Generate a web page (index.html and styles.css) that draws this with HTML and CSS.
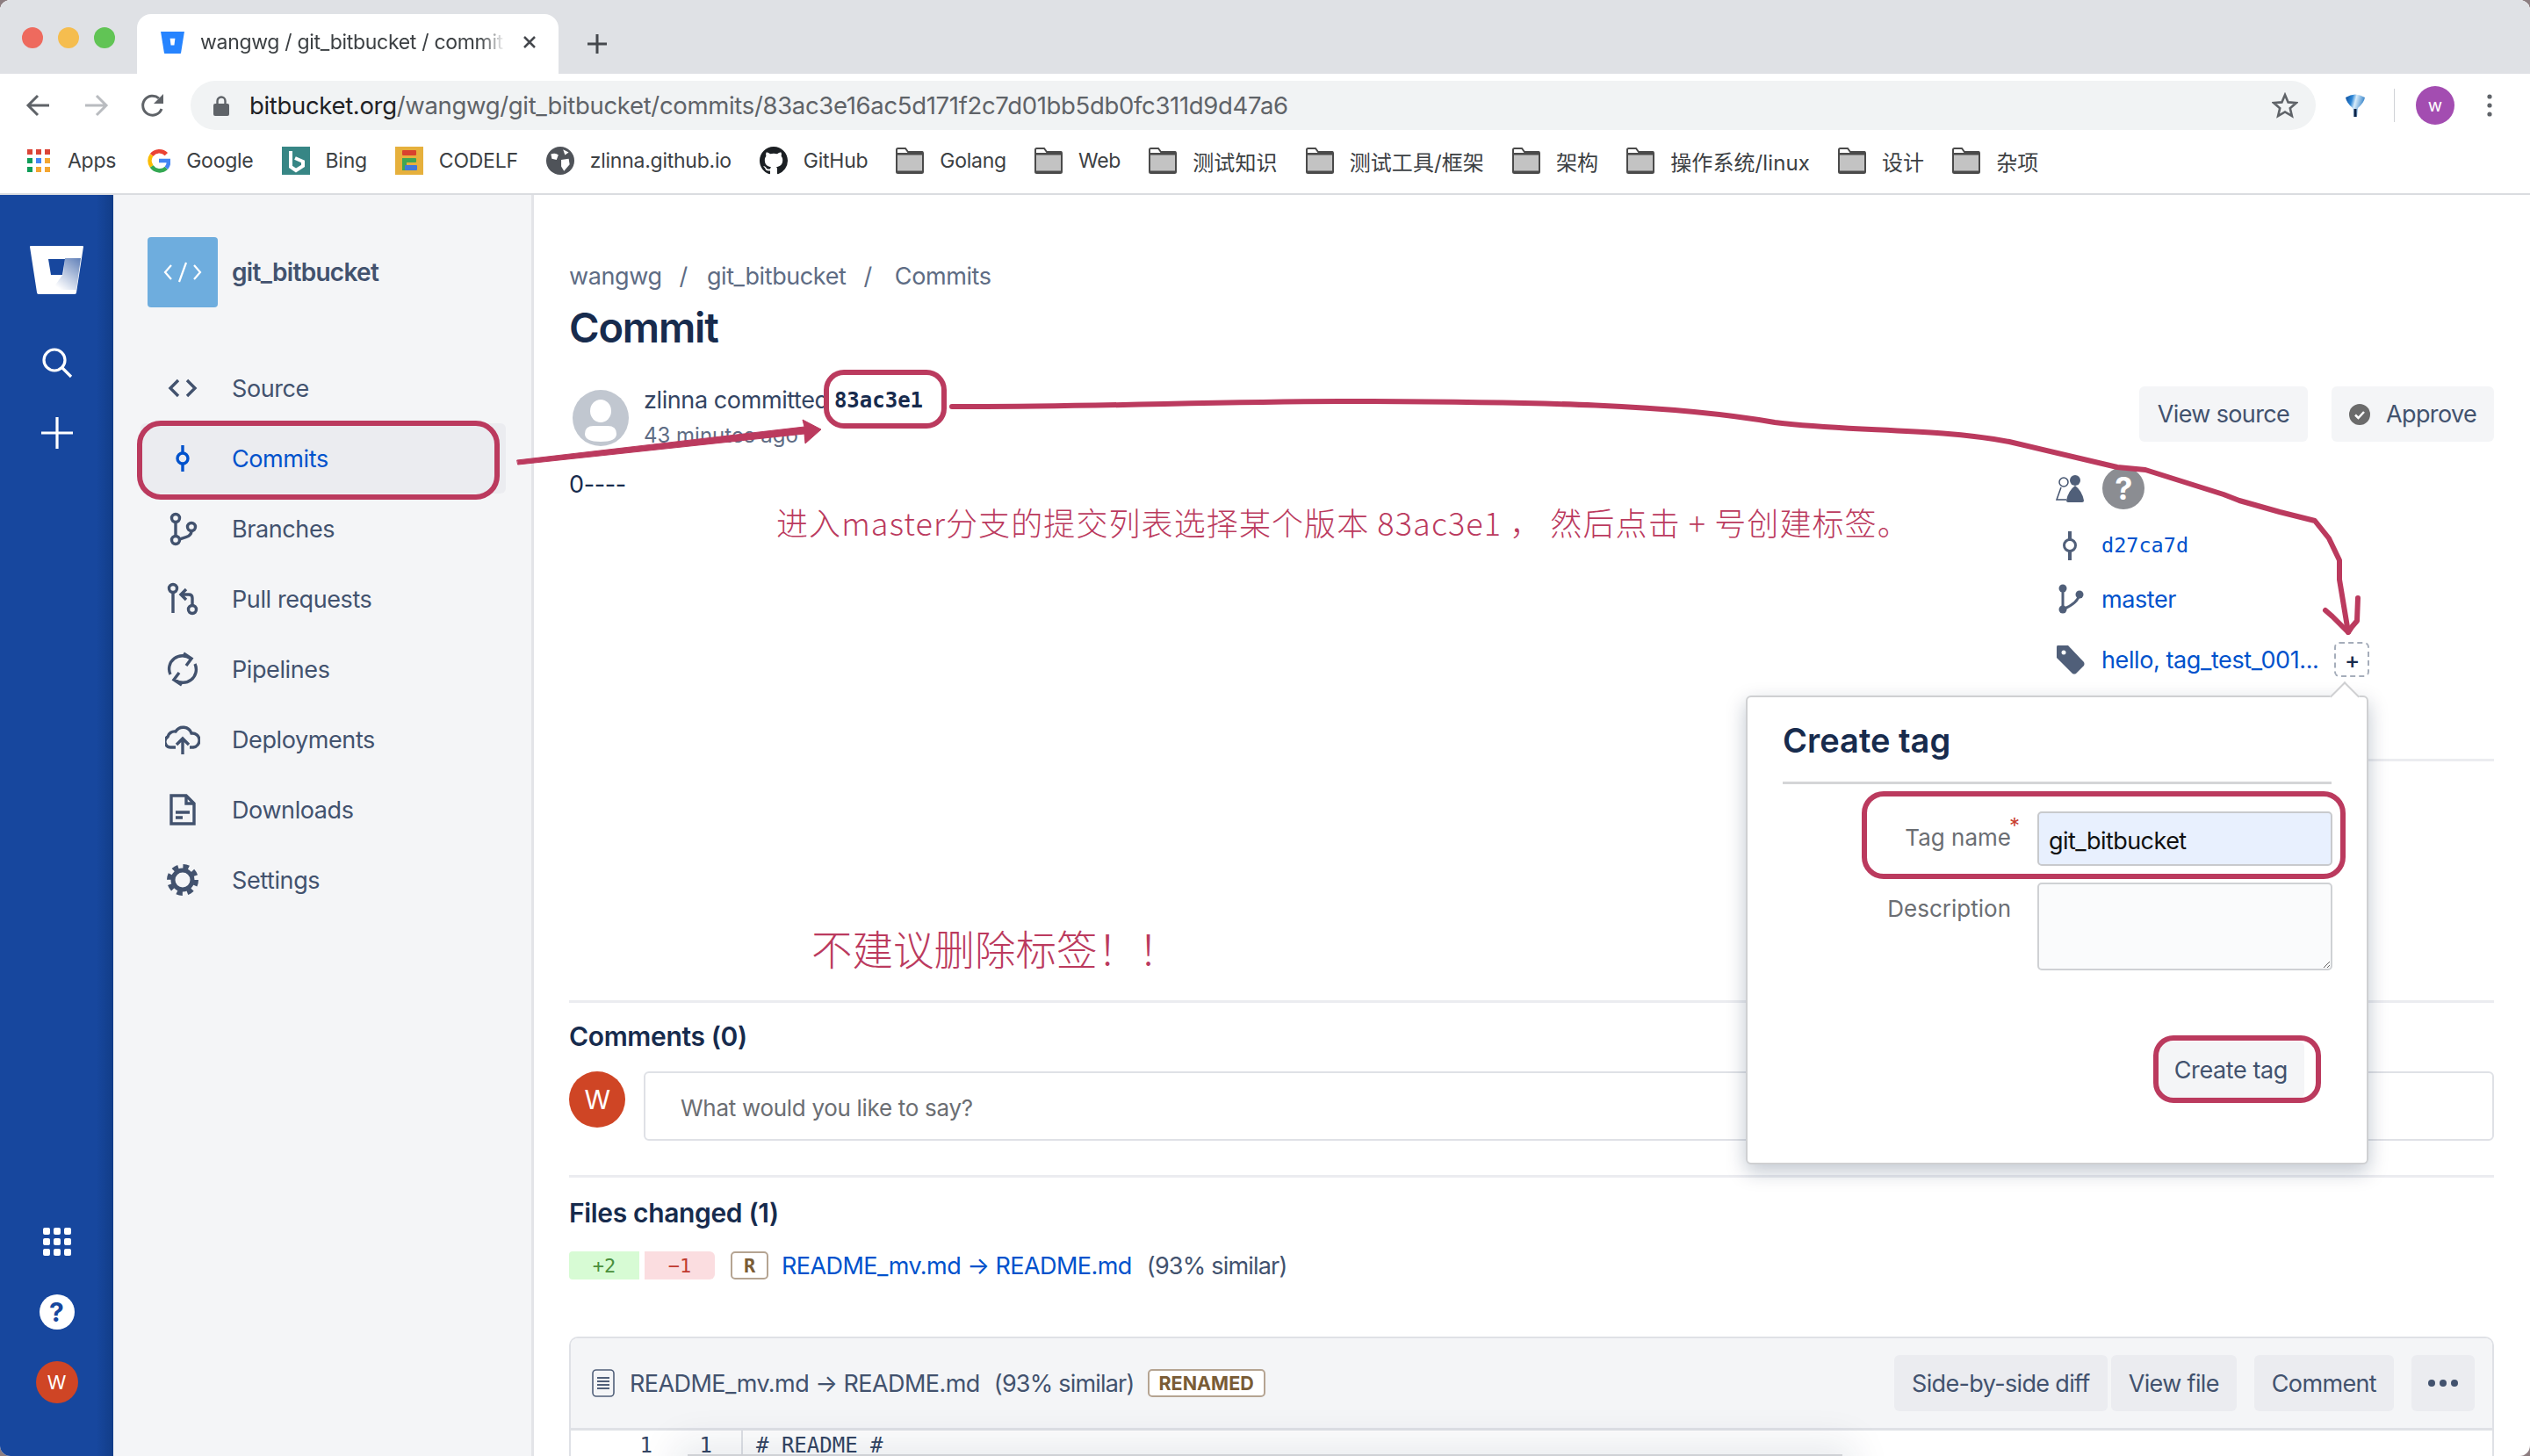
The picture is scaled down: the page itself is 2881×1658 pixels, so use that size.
FILE: index.html
```html
<!DOCTYPE html>
<html lang="en">
<head>
<meta charset="utf-8">
<title>wangwg / git_bitbucket / commit</title>
<link rel="stylesheet" href="styles.css">
</head>
<body>
<svg class="defs" width="0" height="0" aria-hidden="true">
  <defs>
    <symbol id="folder" viewBox="0 0 32 30">
      <path d="M1 5V2.500Q1 1 2.500 1H11l3 4h16.500Q31 5 31 6.500V27.500Q31 29 29.500 29H2.500Q1 29 1 27.500Z" fill="#fff" stroke="#4a4a4a" stroke-width="2"/>
      <rect x="2" y="8" width="28" height="20" fill="#c3c3c3"/>
      <rect x="1" y="6" width="30" height="2.500" fill="#4a4a4a"/>
      <rect x="1" y="26.500" width="30" height="2.500" fill="#4a4a4a"/>
    </symbol>
  </defs>
</svg>
<div class="app">
  <header class="chrome">
    <div class="tabstrip">
      <div class="lights"><span class="light red"></span><span class="light yellow"></span><span class="light green"></span></div>
      <div class="tab">
        <svg class="favicon" viewBox="0 0 28 26"><path d="M0 0H28L24 25Q24 26 23 26H5Q4 26 4 25Z" fill="#2684ff"/><path d="M11 8h6l-1 8h-4z" fill="#fff"/></svg>
        <span class="tab-title">wangwg / git_bitbucket / commit</span>
        <svg class="tab-x" viewBox="0 0 18 18"><path d="M3 3L15 15M15 3L3 15" stroke="#45484d" stroke-width="2.500" fill="none"/></svg>
      </div>
      <svg class="newtab" viewBox="0 0 26 26"><path d="M13 2V24M2 13H24" stroke="#45484d" stroke-width="3" fill="none"/></svg>
    </div>
    <div class="toolbar">
      <svg class="tool" viewBox="0 0 30 30"><path d="M27 15H4M14 4L3 15L14 26" stroke="#5f6368" stroke-width="3" fill="none"/></svg>
      <svg class="tool" viewBox="0 0 30 30"><path d="M3 15H26M16 4L27 15L16 26" stroke="#b9bcc0" stroke-width="3" fill="none"/></svg>
      <svg class="tool" viewBox="0 0 30 30"><path d="M25 19A11 11 0 1 1 22 7" stroke="#5f6368" stroke-width="3" fill="none"/><path d="M27 2V13H16Z" fill="#5f6368"/></svg>
      <div class="omnibox">
        <svg class="lock" viewBox="0 0 18 24"><path d="M4.500 11V7a4.500 4.500 0 0 1 9 0v4" stroke="#5f6368" stroke-width="2.400" fill="none"/><rect x="0" y="10" width="18" height="14" rx="2" fill="#5f6368"/></svg>
        <span class="url"><b class="host">bitbucket.org</b>/wangwg/git_bitbucket/commits/83ac3e16ac5d171f2c7d01bb5db0fc311d9d47a6</span>
        <svg class="star" viewBox="0 0 30 30"><path d="M15 3l3.600 8.400 9.100.8-6.900 6 2.100 8.900L15 22.400 7.100 27.100l2.100-8.900-6.900-6 9.100-.8z" stroke="#5f6368" stroke-width="2.600" fill="none"/></svg>
      </div>
      <div class="ext-group">
        <svg class="ext" viewBox="0 0 24 28"><defs><linearGradient id="extg" x1="0" y1="0" x2="1" y2="0.300"><stop offset="0" stop-color="#0d4a96"/><stop offset=".35" stop-color="#2c86d6"/><stop offset=".55" stop-color="#d8ecfa"/><stop offset="1" stop-color="#2f7fc8"/></linearGradient></defs><path d="M1 5Q12 -2 23 5Q22 11 15 17L14 27H10L9 17Q2 11 1 5Z" fill="url(#extg)"/><path d="M10.500 18H13.500L13.500 27H10.500Z" fill="#0c2347"/></svg>
        <span class="tool-sep"></span>
        <span class="profile">w</span>
        <svg class="dots" viewBox="0 0 6 26"><circle cx="3" cy="3" r="2.600" fill="#5f6368"/><circle cx="3" cy="13" r="2.600" fill="#5f6368"/><circle cx="3" cy="23" r="2.600" fill="#5f6368"/></svg>
      </div>
    </div>
    <nav class="bookmarks">
      <a class="bm bm-apps"><svg class="bm-ic grid" viewBox="0 0 26 26"><g><rect width="6" height="6" fill="#db4437"/><rect x="10" width="6" height="6" fill="#db4437"/><rect x="20" width="6" height="6" fill="#db4437"/><rect y="10" width="6" height="6" fill="#0f9d58"/><rect x="10" y="10" width="6" height="6" fill="#4285f4"/><rect x="20" y="10" width="6" height="6" fill="#f4a630"/><rect y="20" width="6" height="6" fill="#0f9d58"/><rect x="10" y="20" width="6" height="6" fill="#f4a630"/><rect x="20" y="20" width="6" height="6" fill="#f4a630"/></g></svg>Apps</a>
      <a class="bm"><svg class="bm-ic" viewBox="0 0 28 28"><path d="M23 6A12 12 0 0 0 5 7" stroke="#ea4335" stroke-width="5" fill="none"/><path d="M5 7A12 12 0 0 0 5 21" stroke="#fbbc05" stroke-width="5" fill="none"/><path d="M5 21A12 12 0 0 0 23 23" stroke="#34a853" stroke-width="5" fill="none"/><path d="M23 23Q26 20 26 14H14" stroke="#4285f4" stroke-width="5" fill="none"/></svg>Google</a>
      <a class="bm"><svg class="bm-ic wide" viewBox="0 0 32 32"><rect width="32" height="32" fill="#378685"/><path d="M10 5V23L16 27L24 22V17L15 13" stroke="#fff" stroke-width="4" fill="none"/></svg>Bing</a>
      <a class="bm"><svg class="bm-ic wide" viewBox="0 0 32 32"><rect width="32" height="32" fill="#e6b03c"/><rect x="8" y="4" width="16" height="6" rx="1" fill="#d8412f"/><rect x="8" y="13" width="16" height="5" rx="1" fill="#3fa652"/><rect x="8" y="13" width="5" height="14" fill="#3fa652"/><rect x="11" y="21" width="14" height="6" rx="1" fill="#4178d8"/></svg>CODELF</a>
      <a class="bm"><svg class="bm-ic wide" viewBox="0 0 30 30"><circle cx="15" cy="15" r="15" fill="#4f5359"/><path d="M5 8Q10 6 13 9L11 14L6 13ZM16 14L24 13L25 19L19 26L16 21ZM18 3L24 6L20 9Z" fill="#fff"/></svg>zlinna.github.io</a>
      <a class="bm"><svg class="bm-ic wide" viewBox="0 0 16 16"><path d="M8 0C3.580 0 0 3.580 0 8c0 3.540 2.290 6.530 5.470 7.590.4.070.55-.17.55-.38 0-.19-.01-.82-.01-1.490-2.010.37-2.530-.49-2.690-.94-.09-.23-.48-.94-.82-1.130-.28-.15-.68-.52-.01-.53.63-.01 1.080.58 1.230.82.72 1.210 1.870.87 2.330.66.07-.52.28-.87.51-1.070-1.780-.2-3.640-.89-3.640-3.950 0-.87.31-1.590.82-2.150-.08-.2-.36-1.020.08-2.120 0 0 .67-.21 2.200.82.64-.18 1.320-.27 2-.27.68 0 1.360.09 2 .27 1.530-1.040 2.200-.82 2.200-.82.44 1.100.16 1.920.08 2.120.51.56.82 1.270.82 2.150 0 3.070-1.870 3.750-3.650 3.950.29.25.54.73.54 1.480 0 1.070-.01 1.930-.01 2.200 0 .21.15.46.55.38A8.013 8.013 0 0016 8c0-4.420-3.580-8-8-8z" fill="#1b1f23"/></svg>GitHub</a>
      <a class="bm"><svg class="bm-ic wide"><use href="#folder"/></svg>Golang</a>
      <a class="bm"><svg class="bm-ic wide"><use href="#folder"/></svg>Web</a>
      <a class="bm cjk"><svg class="bm-ic wide"><use href="#folder"/></svg>测试知识</a>
      <a class="bm cjk"><svg class="bm-ic wide"><use href="#folder"/></svg>测试工具/框架</a>
      <a class="bm cjk"><svg class="bm-ic wide"><use href="#folder"/></svg>架构</a>
      <a class="bm cjk"><svg class="bm-ic wide"><use href="#folder"/></svg>操作系统/linux</a>
      <a class="bm cjk"><svg class="bm-ic wide"><use href="#folder"/></svg>设计</a>
      <a class="bm cjk"><svg class="bm-ic wide"><use href="#folder"/></svg>杂项</a>
    </nav>
  </header>

  <div class="page">
    <aside class="global-nav">
      <div class="gn-top">
        <svg class="gn-logo" viewBox="0 0 61 55"><defs><linearGradient id="lg" x1="1" y1="0" x2="0.300" y2="1"><stop offset="0" stop-color="#5f7fb8"/><stop offset="1" stop-color="#fff"/></linearGradient></defs><path d="M1 0H60Q61 0 61 1L53 53Q53 55 51 55H10Q8 55 8 53L0 1Q0 0 1 0Z" fill="#fff"/><path d="M40 14H58L53 50H25L38 32Z" fill="url(#lg)"/><path d="M21 15H40L37 33H24Z" fill="#17479e"/></svg>
        <svg class="gn-icon" viewBox="0 0 36 36"><circle cx="15" cy="15" r="12" stroke="#fff" stroke-width="3.200" fill="none"/><path d="M24 24L34 34" stroke="#fff" stroke-width="3.200" fill="none"/></svg>
        <svg class="gn-icon" viewBox="0 0 36 36"><path d="M18 0V36M0 18H36" stroke="#fff" stroke-width="3.200" fill="none"/></svg>
      </div>
      <div class="gn-bottom">
        <svg class="gn-grid" viewBox="0 0 32 32"><g fill="#fff"><rect width="8" height="8" rx="2"/><rect x="12" width="8" height="8" rx="2"/><rect x="24" width="8" height="8" rx="2"/><rect y="12" width="8" height="8" rx="2"/><rect x="12" y="12" width="8" height="8" rx="2"/><rect x="24" y="12" width="8" height="8" rx="2"/><rect y="24" width="8" height="8" rx="2"/><rect x="12" y="24" width="8" height="8" rx="2"/><rect x="24" y="24" width="8" height="8" rx="2"/></g></svg>
        <span class="gn-help">?</span>
        <span class="gn-avatar">W</span>
      </div>
    </aside>

    <aside class="sidebar">
      <div class="repo">
        <span class="repo-tile"><svg viewBox="0 0 44 26" class="repo-code"><path d="M9 5L2 13L9 21M35 5L42 13L35 21M26 2L18 24" stroke="#fff" stroke-width="2.200" fill="none"/></svg></span>
        <span class="repo-name">git_bitbucket</span>
      </div>
      <ul class="side-list">
        <li class="side-item"><svg class="side-ic" viewBox="0 0 40 40"><path d="M15 11L6 20L15 29M25 11L34 20L25 29"/></svg>Source</li>
        <li class="side-item active"><svg class="side-ic" viewBox="0 0 40 40"><path d="M20 5V14M20 26V35"/><circle cx="20" cy="20" r="6"/></svg>Commits</li>
        <li class="side-item"><svg class="side-ic" viewBox="0 0 40 40"><circle cx="12" cy="8" r="4.500"/><circle cx="12" cy="33" r="4.500"/><circle cx="30" cy="18" r="4.500"/><path d="M12 12.500V28.500M30 22.500C30 30 21 30 16 32"/></svg>Branches</li>
        <li class="side-item"><svg class="side-ic" viewBox="0 0 40 40"><circle cx="9" cy="8" r="4.500"/><circle cx="31" cy="32" r="4.500"/><path d="M9 12.500V36M31 27.500V19Q31 15 27 15H19M24 9L18 15L24 21"/></svg>Pull requests</li>
        <li class="side-item"><svg class="side-ic" viewBox="0 0 40 40"><path d="M6 26A15 15 0 0 1 29 8M34 14A15 15 0 0 1 11 32M21 2L30 8L24 16M19 38L10 32L16 24"/></svg>Pipelines</li>
        <li class="side-item"><svg class="side-ic" viewBox="0 0 40 40"><path d="M12 29H7A6.500 6.500 0 0 1 3 17A8 8 0 0 1 12 11A10 10 0 0 1 30 13A8 8 0 0 1 32 29H28M20 37V20M13 26L20 19L27 26"/></svg>Deployments</li>
        <li class="side-item"><svg class="side-ic" viewBox="0 0 40 40"><path d="M7 4H24L33 13V36H7ZM24 4V13H33M12 23H28M12 29H20"/></svg>Downloads</li>
        <li class="side-item"><svg class="side-ic" viewBox="0 0 40 40"><circle cx="20" cy="20" r="11" stroke-width="5"/><circle cx="20" cy="20" r="15.500" stroke-width="5" stroke-dasharray="6.600 5.570"/></svg>Settings</li>
      </ul>
    </aside>

    <main class="main">
      <div class="crumbs"><span>wangwg</span><i>/</i><span>git_bitbucket</span><i class="last">/</i><span>Commits</span></div>
      <h1 class="title">Commit</h1>

      <div class="commit-head">
        <svg class="user-ph" viewBox="0 0 64 64"><circle cx="32" cy="32" r="32" fill="#c1c7d0"/><ellipse cx="32" cy="24" rx="12" ry="13" fill="#fff"/><path d="M14 50Q14 41 24 41H40Q50 41 50 50Q50 59 32 59Q14 59 14 50Z" fill="#fff"/></svg>
        <div class="who">
          <div class="who-line">zlinna committed <code class="hash">83ac3e1</code></div>
          <div class="who-time">43 minutes ago</div>
        </div>
        <div class="head-actions">
          <button class="btn">View source</button>
          <button class="btn approve"><svg class="approve-ic" viewBox="0 0 24 24"><circle cx="12" cy="12" r="12" fill="#6b6b6b"/><path d="M7 12.500L10.500 16L17 9" stroke="#fff" stroke-width="2.500" fill="none"/></svg>Approve</button>
        </div>
      </div>

      <div class="commit-body">
        <p class="message">0----</p>
        <div class="rail">
          <div class="rail-row first">
            <svg class="rail-ic" viewBox="0 0 34 34"><circle cx="10" cy="10" r="5" fill="none" stroke="#42526e" stroke-width="1.500"/><path d="M7 16L2 30H13" fill="none" stroke="#42526e" stroke-width="1.500"/><circle cx="23" cy="8" r="6" fill="#505f79"/><path d="M23 14Q15 20 13 31Q13 33 15 33H31Q33 33 33 31Q31 20 23 14Z" fill="#505f79"/></svg>
            <span class="unknown">?</span>
          </div>
          <div class="rail-row hash-row"><svg class="rail-ic" viewBox="0 0 34 34"><path d="M17 1V10M17 24V34" stroke="#505f79" stroke-width="4" fill="none"/><circle cx="17" cy="17" r="6.500" fill="none" stroke="#505f79" stroke-width="3"/></svg><a class="link mono">d27ca7d</a></div>
          <div class="rail-row branch-row"><svg class="rail-ic" viewBox="0 0 34 34"><circle cx="9" cy="5" r="4.500" fill="#505f79"/><circle cx="9" cy="29" r="4.500" fill="#505f79"/><circle cx="28" cy="12" r="4.500" fill="#505f79"/><path d="M9 5V29M28 12Q26 22 9 29" stroke="#505f79" stroke-width="3" fill="none"/></svg><a class="link">master</a></div>
          <div class="rail-row tag-row"><svg class="rail-ic" viewBox="0 0 34 34"><path d="M3 1H15L33 20Q34 22 33 24L24 33Q22 34 20 33L2 15V3Q2 1 3 1Z" fill="#505f79"/><circle cx="10" cy="9" r="2.500" fill="#fff"/></svg><a class="link">hello, tag_test_001...</a><span class="add-tag">+</span></div>
        </div>
      </div>

      <section class="section comments">
        <h2 class="sub">Comments (0)</h2>
        <div class="comment-row">
          <span class="avatar">W</span>
          <input class="comment-input" placeholder="What would you like to say?">
        </div>
      </section>

      <section class="section files">
        <h2 class="sub">Files changed (1)</h2>
        <div class="file-sum">
          <span class="stat add">+2</span><span class="stat del">−1</span><span class="r-badge">R</span>
          <a class="link file-link">README_mv.md → README.md</a><span class="similar">(93% similar)</span>
        </div>
        <div class="diff">
          <div class="diff-head">
            <svg class="doc-ic" viewBox="0 0 26 32"><rect x="1" y="1" width="24" height="30" rx="4" fill="none" stroke="#505f79" stroke-width="1.600"/><path d="M6 10H20M6 14H20M6 18H20M6 22H20" stroke="#505f79" stroke-width="2"/></svg>
            <span class="diff-name">README_mv.md → README.md</span>
            <span class="diff-sim">(93% similar)</span>
            <span class="lozenge">RENAMED</span>
            <div class="diff-actions">
              <div class="btn-join"><button class="btn dark">Side-by-side diff</button><button class="btn dark">View file</button></div>
              <button class="btn dark">Comment</button>
              <button class="btn dark more"><span></span><span></span><span></span></button>
            </div>
          </div>
          <div class="diff-line"><span class="ln">1</span><span class="ln two">1</span><span class="code"># README #</span></div>
        </div>
      </section>
    </main>
  </div>

  <div class="dock-shadow"></div>

  <div class="popover">
    <span class="pop-arrow"></span>
    <h3 class="pop-title">Create tag</h3>
    <form class="pop-form">
      <label class="pop-label">Tag name<sup class="req">*</sup></label>
      <input class="pop-input" value="git_bitbucket">
      <label class="pop-label desc">Description</label>
      <textarea class="pop-area"></textarea>
      <button type="button" class="btn pop-btn">Create tag</button>
    </form>
  </div>

  <svg class="marks" viewBox="0 0 2881 1658">
    <rect x="159" y="482" width="407" height="84" rx="24"/>
    <rect x="941" y="424" width="134" height="61" rx="20"/>
    <rect x="2123" y="904" width="545" height="94" rx="22"/>
    <rect x="2455" y="1182" width="185" height="71" rx="20"/>
    <path class="solid" d="M589 524L916 486L914 478L935 489L917 505L916 494L590 529Z"/>
    <path d="M1084 463C1250 464 1400 456 1562 457C1750 458 1900 460 2021 481C2110 492 2200 487 2288 503L2411 532L2443 535L2532 563L2550 570L2596 583L2636 593L2652 613L2664 638L2664 660L2674 720"/>
    <path d="M2648 695L2656 702L2674 720L2678 714L2684 707L2685 681"/>
  </svg>
  <p class="note note-a">进入master分支的提交列表选择某个版本 83ac3e1 ， 然后点击 + 号创建标签。</p>
  <p class="note note-b">不建议删除标签！！</p>
</div>
</body>
</html>
```
FILE: styles.css
```css
* { box-sizing: border-box; }
html, body { margin: 0; padding: 0; height: 100%; background: #8c7d80; overflow: hidden; }
body { font-family: Inter, "Noto Sans CJK SC", sans-serif; color: #172b4d; }
.defs { position: absolute; }
.app { position: relative; width: 2881px; height: 1658px; background: #fff; border-radius: 12px; overflow: hidden; display: flex; flex-direction: column; }

/* browser chrome */
.chrome { height: 222px; flex: none; border-bottom: 2px solid #dadce0; background: #fff; }
.tabstrip { height: 84px; background: #dfe1e5; display: flex; align-items: flex-end; padding-left: 25px; }
.lights { display: flex; gap: 17px; align-self: flex-start; margin-top: 31px; width: 131px; }
.light { width: 24px; height: 24px; border-radius: 50%; }
.red { background: #ee6a5e; } .yellow { background: #f5bd4f; } .green { background: #61c455; }
.tab { width: 480px; height: 68px; background: #fff; border-radius: 16px 16px 0 0; display: flex; align-items: center; padding: 0 0 4px 27px; }
.favicon { width: 27px; height: 25px; flex: none; }
.tab-title { width: 347px; margin-left: 18px; font-size: 23px; letter-spacing: -.3px; color: #3c4043; white-space: nowrap; -webkit-mask-image: linear-gradient(90deg, #000 92%, transparent); mask-image: linear-gradient(90deg, #000 92%, transparent); }
.tab-x { width: 18px; height: 18px; margin-left: 19px; flex: none; }
.newtab { width: 26px; height: 26px; margin: 0 0 21px 31px; }
.toolbar { height: 72px; display: flex; align-items: center; padding: 0 0 0 29px; }
.tool { width: 30px; height: 30px; margin-right: 35px; flex: none; }
.toolbar .tool:nth-child(3) { margin-right: 28px; }
.omnibox { width: 2420px; height: 56px; margin-left: 0; border-radius: 28px; background: #f1f3f4; display: flex; align-items: center; padding-left: 26px; position: relative; flex: none; }
.lock { width: 18px; height: 24px; flex: none; }
.url { margin-left: 23px; font-size: 27.500px; letter-spacing: -.33px; color: #5f6368; white-space: nowrap; }
.host { font-weight: 400; color: #202124; }
.star { width: 30px; height: 30px; margin-left: auto; margin-right: 20px; flex: none; }
.ext-group { display: flex; align-items: center; flex: none; margin-left: 33px; }
.ext { width: 24px; height: 28px; }
.tool-sep { width: 1px; height: 38px; background: #d0d2d6; margin: 0 24px 0 32px; }
.profile { width: 44px; height: 44px; border-radius: 50%; background: #a34db1; color: #fff; font-size: 20px; display: flex; align-items: center; justify-content: center; }
.dots { width: 6px; height: 26px; margin-left: 37px; }
.bookmarks { height: 64px; display: flex; align-items: center; padding: 0 0 10px 31px; gap: 32px; font-size: 23px; letter-spacing: -.25px; color: #3c4043; white-space: nowrap; }
.bm { display: flex; align-items: center; gap: 18px; }
.bm-apps { gap: 20px; margin-right: 4px; }
.bm.cjk { font-size: 24px; letter-spacing: .1px; }
.bm-ic { width: 26px; height: 28px; flex: none; }
.bm-ic.grid { height: 26px; }
.bm-ic.wide { width: 32px; height: 32px; }

/* page layout */
.page { flex: 1; display: flex; min-height: 0; }
.global-nav { width: 129px; flex: none; background: linear-gradient(90deg, #17479e 85%, #123d88); display: flex; flex-direction: column; justify-content: space-between; align-items: center; padding: 58px 0 60px; }
.gn-top { display: flex; flex-direction: column; align-items: center; }
.gn-logo { width: 61px; height: 55px; margin-bottom: 60px; }
.gn-icon { width: 36px; height: 36px; margin-bottom: 44px; }
.gn-bottom { display: flex; flex-direction: column; align-items: center; gap: 44px; }
.gn-grid { width: 32px; height: 32px; }
.gn-help { width: 40px; height: 40px; border-radius: 50%; background: #fff; color: #17479e; font-weight: 700; font-size: 30px; display: flex; align-items: center; justify-content: center; }
.gn-avatar { width: 48px; height: 48px; border-radius: 50%; background: #cf4525; color: #fff; font-size: 22px; display: flex; align-items: center; justify-content: center; margin-top: -8px; }

.sidebar { width: 479px; flex: none; background: #f4f5f7; border-right: 3px solid #e3e4e8; padding: 48px 31px 0 31px; }
.repo { display: flex; align-items: center; gap: 16px; padding-left: 8px; }
.repo-tile { width: 80px; height: 80px; background: #6eadde; border-radius: 4px; display: flex; align-items: center; justify-content: center; }
.repo-code { width: 44px; height: 26px; }
.repo-name { font-size: 28px; letter-spacing: -.7px; font-weight: 600; color: #42526e; }
.side-list { list-style: none; margin: 52px 0 0; padding: 0; width: 416px; }
.side-item { height: 80px; display: flex; align-items: center; font-size: 27px; letter-spacing: -.4px; color: #42526e; padding-left: 28px; gap: 36px; }
.side-ic { width: 40px; height: 40px; flex: none; fill: none; stroke: #42526e; stroke-width: 3.400; }
.side-item.active { background: #ebecf0; color: #0052cc; border-radius: 6px; }
.side-item.active .side-ic { stroke: #0052cc; }

.main { flex: 1; min-width: 0; padding: 72px 41px 0 40px; font-size: 27px; letter-spacing: -.4px; }
.crumbs { height: 40px; display: flex; align-items: center; color: #5e6c84; }
.crumbs i { font-style: normal; margin: 0 22px 0 20px; }
.crumbs i.last { margin-right: 26px; }
.title { margin: 11px 0 0; font-size: 47px; letter-spacing: -1.200px; line-height: 56px; font-weight: 600; color: #172b4d; }
.commit-head { margin-top: 39px; height: 64px; display: flex; align-items: flex-start; }
.user-ph { width: 64px; height: 64px; margin: 4px 0 0 4px; flex: none; }
.who { margin-left: 17px; }
.who-line { line-height: 32px; color: #344563; display: flex; white-space: pre; }
.hash { font-family: "DejaVu Sans Mono", monospace; font-weight: 700; font-size: 24px; letter-spacing: 0; color: #172b4d; line-height: 32px; margin-left: -1px; }
.who-time { font-size: 24px; letter-spacing: 0; line-height: 30px; margin-top: 9px; color: #5e6c84; }
.head-actions { margin-left: auto; display: flex; gap: 27px; }
.btn { height: 63px; padding: 0 21px; border: 0; border-radius: 6px; background: #f4f5f7; font: 400 27px Inter, sans-serif; letter-spacing: -.65px; color: #42526e; display: inline-flex; align-items: center; white-space: nowrap; }
.approve { padding: 0 20px; }
.approve-ic { width: 24px; height: 24px; margin-right: 18px; }

.commit-body { display: flex; justify-content: space-between; margin-top: 28px; height: 335px; }
.message { margin: 0; line-height: 40px; color: #172b4d; }
.rail { width: 500px; border-bottom: 3px solid #ebecf0; }
.rail-row { display: flex; align-items: center; }
.rail-ic { width: 34px; height: 34px; flex: none; margin-right: 19px; }
.first { height: 48px; }
.first .rail-ic { margin-right: 20px; }
.unknown { width: 48px; height: 48px; border-radius: 50%; background: #8b8d92; color: #fff; font-weight: 700; font-size: 36px; display: flex; align-items: center; justify-content: center; }
.hash-row { margin-top: 21px; height: 40px; }
.branch-row { margin-top: 21px; height: 40px; }
.tag-row { margin-top: 29px; height: 40px; }
.link { color: #0052cc; text-decoration: none; }
.mono { font-family: "DejaVu Sans Mono", monospace; font-size: 23.500px; letter-spacing: 0; }
.add-tag { width: 40px; height: 40px; margin-left: 18px; border: 2px dashed #a5adba; border-radius: 6px; font-size: 26px; font-weight: 500; display: flex; align-items: center; justify-content: center; color: #172b4d; }

.section { border-top: 3px solid #ebecf0; }
.comments { margin-top: 272px; padding-top: 18px; }
.sub { margin: 0; font-size: 30px; line-height: 40px; font-weight: 600; color: #172b4d; letter-spacing: -.35px; }
.comment-row { margin-top: 20px; display: flex; gap: 21px; height: 79px; }
.avatar { width: 64px; height: 64px; flex: none; border-radius: 50%; background: #cf4525; color: #fff; font-size: 30px; display: flex; align-items: center; justify-content: center; }
.comment-input { flex: 1; min-width: 0; height: 79px; border: 2px solid #dfe1e6; border-radius: 6px; padding: 3px 40px 0; font: 400 26px Inter, sans-serif; letter-spacing: -.3px; color: #172b4d; }
.comment-input::placeholder { color: #6b6e73; opacity: 1; }
.files { margin-top: 39px; padding-top: 20px; }
.file-sum { margin-top: 24px; height: 32px; display: flex; align-items: center; }
.stat { width: 80px; height: 32px; display: flex; align-items: center; justify-content: center; font-family: "DejaVu Sans Mono", monospace; font-size: 22px; letter-spacing: 0; }
.add { background: #d7fbd4; color: #4a8f3c; border-radius: 4px 0 0 4px; }
.del { background: #fbdde0; color: #c0392f; margin-left: 6px; border-radius: 0 6px 6px 0; }
.r-badge { width: 43px; height: 32px; margin-left: 18px; border: 2px solid #b5a492; border-radius: 5px; display: flex; align-items: center; justify-content: center; font-family: "DejaVu Sans Mono", monospace; font-weight: 700; font-size: 22px; color: #7a5c36; }
.file-link { margin-left: 15px; letter-spacing: -.55px; }
.similar { margin-left: 17px; color: #42526e; letter-spacing: -.8px; }
.diff { margin-top: 65px; border: 2px solid #dfe1e6; border-bottom: 0; border-radius: 10px 10px 0 0; overflow: hidden; }
.diff-head { height: 105px; background: #f4f5f7; border-bottom: 3px solid #dfe1e6; display: flex; align-items: center; padding: 0 20px 0 24px; color: #42526e; }
.doc-ic { width: 26px; height: 32px; flex: none; }
.diff-name { margin-left: 17px; letter-spacing: -.55px; }
.diff-sim { margin-left: 16px; letter-spacing: -.8px; }
.lozenge { margin-left: 15px; height: 32px; padding: 0 11px; border: 2px solid #b5a492; border-radius: 5px; display: flex; align-items: center; background: #fff; font-size: 21.500px; font-weight: 700; letter-spacing: 0; color: #7a5c36; }
.diff-actions { margin-left: auto; display: flex; gap: 20px; }
.btn-join { display: flex; gap: 4px; }
.btn.dark { background: #ebecf0; height: 64px; padding: 0 20px; }
.btn.dark.more { gap: 5px; padding: 0 19px; }
.more span { width: 8px; height: 8px; border-radius: 50%; background: #42526e; }
.diff-line { height: 40px; padding-top: 3px; display: flex; font-family: "DejaVu Sans Mono", monospace; font-size: 24px; letter-spacing: 0; color: #344563; }
.ln { width: 93px; text-align: right; }
.ln.two { width: 68px; }
.code { margin-left: 33px; margin-top: -3px; padding-top: 3px; border-left: 2px solid #dfe1e6; padding-left: 15px; }

/* soft shadow of a panel cut by the bottom of the window */
.dock-shadow { position: absolute; left: 783px; width: 1315px; top: 1656px; height: 30px; background: #cfd1d5; box-shadow: 0 0 44px 14px rgba(9,30,66,.09); z-index: 1; }

/* popover */
.popover { position: absolute; left: 1988px; top: 792px; width: 709px; height: 534px; background: #fff; border: 2px solid #cfd0d2; border-radius: 6px; box-shadow: 0 8px 22px rgba(9,30,66,.25); padding: 24px 40px 0; z-index: 2; }
.pop-arrow { position: absolute; left: 668px; top: -13px; width: 24px; height: 24px; background: #fff; border-left: 2px solid #cfd0d2; border-top: 2px solid #cfd0d2; transform: rotate(45deg); }
.pop-title { margin: 0; height: 75px; padding-bottom: 25px; border-bottom: 3px solid #d4d5d7; font-size: 38px; line-height: 50px; font-weight: 600; color: #172b4d; }
.pop-form { display: grid; grid-template-columns: 260px 336px; column-gap: 30px; margin-top: 31px; }
.pop-label { text-align: right; font-size: 26px; line-height: 59px; color: #6b6e73; position: relative; }
.pop-label.desc { margin-top: 19px; line-height: 59px; }
.req { position: absolute; right: -10px; top: 0; color: #c9402f; font-size: 24px; line-height: 34px; }
.pop-input { width: 336px; height: 62px; border: 2px solid #c8cacd; border-radius: 5px; background: #e8f0fe; padding: 4px 11px 0; font: 400 27px Inter, sans-serif; letter-spacing: -.55px; color: #111; }
.pop-area { width: 336px; height: 100px; margin-top: 19px; border: 2px solid #cfd1d4; border-radius: 5px; background: #fafbfc; display: block; }
.pop-btn { grid-column: 2; justify-self: end; margin: 81px 32px 0 0; height: 64px; padding: 0 19px; letter-spacing: -.4px; }

/* annotations */
.marks { position: absolute; left: 0; top: 0; width: 2881px; height: 1658px; fill: none; stroke: #bb3a5e; stroke-width: 6; stroke-linecap: round; stroke-linejoin: round; z-index: 3; pointer-events: none; }
.marks .solid { fill: #bb3a5e; stroke-width: 1; }
.note { position: absolute; margin: 0; color: #bb3a5e; white-space: nowrap; font-family: "Noto Sans CJK SC", sans-serif; font-weight: 300; z-index: 3; }
.note-a { left: 884px; top: 568px; font-size: 36px; line-height: 52px; letter-spacing: 1.100px; }
.note-b { left: 924px; top: 1047px; font-size: 46.500px; line-height: 64px; }
```
